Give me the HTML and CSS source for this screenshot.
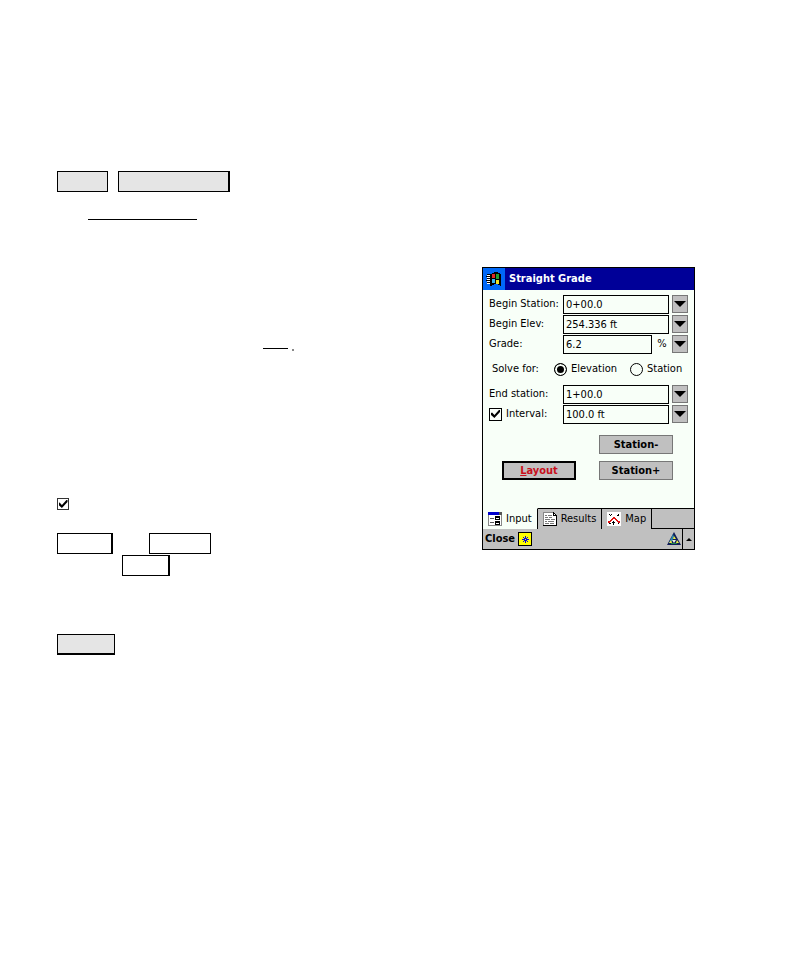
FILE: index.html
```html
<!DOCTYPE html>
<html lang="en">
<head>
    <meta charset="UTF-8">
    <meta name="viewport" content="width=device-width, initial-scale=1.0">
    <title>Straight Grade</title>
    <link rel="stylesheet" href="styles.css">
</head>
<body>
    <main class="page">
        <section class="notes">
            <div class="key-row">
                <button type="button" class="key filled w-small"></button>
                <button type="button" class="key filled shadow-right w-large"></button>
            </div>
            <div class="rule"></div>
            <div class="blank-link"><span class="line"></span><span class="dot"></span></div>
            <input type="checkbox" class="note-check" checked>
            <div class="key-row wide-gap">
                <button type="button" class="key shadow-right w-medium"></button>
                <button type="button" class="key w-wide"></button>
            </div>
            <div class="key-row indented">
                <button type="button" class="key shadow-right w-short"></button>
            </div>
            <div class="key-row last">
                <button type="button" class="key filled shadow-bottom w-base"></button>
            </div>
        </section>

        <section class="device">
            <header class="title-bar">
                <span class="start">
                    <svg width="16" height="16" viewBox="0 0 16 16" shape-rendering="crispEdges">
                        <path d="M1 3h3v1H1zM0 5h4v1H0zM1 7h3v1H1zM0 9h4v1H0zM1 11h3v1H1z" fill="#000"/>
                        <path d="M1 4h3v1H1zM1 6h3v1H1zM1 8h3v1H1zM1 10h3v1H1zM1 12h3v1H1z" fill="#fff"/>
                        <path d="M4 3h2V2h2V1h4v1h2v1h1v12h-1v-1h-2v-1H8v1H6v1H4z" fill="#000"/>
                        <path d="M6 3h3v4H6z" fill="#e02828"/>
                        <path d="M10 3h3v5h-3z" fill="#20a030"/>
                        <path d="M6 8h3v4H6z" fill="#38b8f0"/>
                        <path d="M10 9h3v4h-3z" fill="#f0e020"/>
                    </svg>
                </span>
                <h1>Straight Grade</h1>
            </header>

            <form class="panel">
                <div class="field">
                    <label for="begin-station">Begin Station:</label>
                    <input type="text" id="begin-station" value="0+00.0">
                    <button type="button" class="drop"></button>
                </div>
                <div class="field">
                    <label for="begin-elev">Begin Elev:</label>
                    <input type="text" id="begin-elev" value="254.336 ft">
                    <button type="button" class="drop"></button>
                </div>
                <div class="field with-unit">
                    <label for="grade">Grade:</label>
                    <input type="text" id="grade" value="6.2">
                    <span class="unit">%</span>
                    <button type="button" class="drop"></button>
                </div>

                <div class="solve">
                    <span class="solve-title">Solve for:</span>
                    <label class="choice first"><input type="radio" name="solve" checked>Elevation</label>
                    <label class="choice"><input type="radio" name="solve">Station</label>
                </div>

                <div class="field">
                    <label for="end-station">End station:</label>
                    <input type="text" id="end-station" value="1+00.0">
                    <button type="button" class="drop"></button>
                </div>
                <div class="field">
                    <label class="check"><input type="checkbox" checked>Interval:</label>
                    <input type="text" id="interval" value="100.0 ft">
                    <button type="button" class="drop"></button>
                </div>

                <div class="actions">
                    <button type="button" class="action minus">Station-</button>
                    <button type="button" class="action layout"><u>L</u>ayout</button>
                    <button type="button" class="action">Station+</button>
                </div>
            </form>

            <nav class="tabs">
                <button type="button" class="tab active">
                    <svg width="14" height="14" viewBox="0 0 14 14" shape-rendering="crispEdges">
                        <path d="M0 0h14v14H0z" fill="#888"/>
                        <path d="M0 0h11v3H0z" fill="#00c"/>
                        <path d="M11 0h3v3h-3z" fill="#555"/>
                        <path d="M1 3h12v10H1z" fill="#fff"/>
                        <path d="M2 6h4v1H2zM2 10h4v1H2z" fill="#555"/>
                        <path d="M7 4h5v4H7zM7 9h5v4H7z" fill="#000"/>
                        <path d="M8 6h3v1H8zM8 11h3v1H8z" fill="#fff"/>
                    </svg>
                    <span>Input</span>
                </button>
                <button type="button" class="tab results">
                    <svg width="14" height="14" viewBox="0 0 14 14" shape-rendering="crispEdges">
                        <path d="M0 0h10l4 4v10H0z" fill="#fff"/>
                        <path d="M0 0h10v1H0zM0 0h1v14H0z" fill="#888"/>
                        <path d="M0 13h14v1H0zM13 4h1v10h-1zM10 0h1v4h-1zM10 3h4v1h-4zM11 1h1v1h-1zM12 2h1v1h-1z" fill="#000"/>
                        <path d="M2 3h2v1H2zM5 3h4v1H5zM2 5h3v1H2zM6 5h3v1H6zM2 7h5v1H2zM8 7h4v1H8zM2 9h2v1H2zM5 9h6v1H5zM2 11h4v1H2zM7 11h4v1H7z" fill="#777"/>
                    </svg>
                    <span>Results</span>
                </button>
                <button type="button" class="tab">
                    <svg width="14" height="14" viewBox="0 0 14 14" shape-rendering="crispEdges">
                        <path d="M0 0h14v14H0z" fill="#fff"/>
                        <path d="M2 2h1v1H2zM3 3h1v1H3zM4 2h1v1H4zM11 2h1v2h-1zM10 3h1v1h-1zM2 11h2v1H2zM6 9h1v4H6zM5 10h3v1H5zM11 11h1v1h-1z" fill="#000"/>
                        <path d="M1 9h2V8h1V7h1V6h1V5h2v1h1v1h1v1h1v1h2v2h-2v-1h-1V9H9V8H8V7H6v1H5v1H4v1H3v1H1z" fill="#e01010"/>
                    </svg>
                    <span>Map</span>
                </button>
            </nav>

            <footer class="status-bar">
                <button type="button" class="close">Close</button>
                <button type="button" class="star">
                    <svg width="9" height="9" viewBox="0 0 9 9" shape-rendering="crispEdges">
                        <path d="M4 1h1v7H4zM1 4h7v1H1zM2 2h1v1H2zM3 3h1v1H3zM6 2h1v1H6zM5 3h1v1H5zM3 5h1v1H3zM2 6h1v1H2zM5 5h1v1H5zM6 6h1v1H6z" fill="#0000e0"/>
                        <path d="M4 4h1v1H4z" fill="#ff0"/>
                    </svg>
                </button>
                <span class="spacer"></span>
                <svg class="survey" width="14" height="14" viewBox="0 0 14 14">
                    <path d="M7 0L14 13H0z" fill="#101c58"/>
                    <path d="M6 2L2 11h2l3-6z" fill="#2888b0"/>
                    <path d="M7 4l2 3H6zM2 11l2-3 1 3zM9 11l1-3 2 3z" fill="#f0f040"/>
                    <path d="M4 11h6v1H4z" fill="#208848"/>
                    <path d="M5 8h4l-2 3z" fill="#e8f0e8"/>
                </svg>
                <button type="button" class="expand"></button>
            </footer>
        </section>
    </main>
</body>
</html>
```

FILE: styles.css
```css
* {
    box-sizing: border-box;
}
body {
    margin: 0;
    background: #fff;
    color: #000;
    font-family: "DejaVu Sans Condensed", "DejaVu Sans", sans-serif;
    font-stretch: condensed;
    font-size: 11px;
    line-height: 16px;
}
button,
input {
    margin: 0;
    padding: 0;
    font: inherit;
    color: inherit;
    border-radius: 0;
}
.page {
    display: grid;
    grid-template-columns: 1fr 213px;
    align-items: start;
    padding: 171px 91px 40px 57px;
}

/* left column */
.notes {
    display: flex;
    flex-direction: column;
    align-items: flex-start;
}
.key-row {
    display: flex;
    gap: 10px;
}
.key {
    height: 21px;
    background: #fff;
    border: 1px solid #000;
}
.filled {
    background: #e5e5e5;
}
.shadow-right {
    border-right-width: 2px;
}
.shadow-bottom {
    border-bottom-width: 2px;
}
.w-small { width: 51px; }
.w-large { width: 112px; }
.w-medium { width: 56px; }
.w-wide { width: 62px; }
.w-short { width: 48px; }
.w-base { width: 58px; }
.rule {
    width: 109px;
    height: 1px;
    margin: 27px 0 0 31px;
    background: #000;
}
.blank-link {
    display: flex;
    align-items: flex-start;
    gap: 4px;
    margin: 128px 0 0 206px;
}
.line {
    width: 25px;
    height: 1px;
    background: #000;
}
.dot {
    width: 2px;
    height: 2px;
    margin-top: 1px;
    background: #888;
}
input[type="checkbox"] {
    flex: none;
    appearance: none;
    width: 13px;
    height: 13px;
    border: 1px solid #000;
    background: #fafffa;
    display: grid;
    place-content: center;
}
input[type="checkbox"]:checked::before {
    content: "";
    width: 9px;
    height: 8px;
    background: #000;
    clip-path: polygon(0 38%, 12% 32%, 38% 62%, 88% 0, 100% 0, 100% 25%, 38% 100%, 0 62%);
}
.notes .note-check {
    width: 12px;
    height: 12px;
    margin-top: 147px;
    border-color: #333;
    background: #fff;
}
.wide-gap {
    gap: 36px;
    margin-top: 23px;
}
.indented {
    margin: 1px 0 0 65px;
}
.last {
    margin-top: 58px;
}

/* handheld screen */
.device {
    margin-top: 96px;
    border: 1px solid #000;
    background: #f8fff8;
}
.title-bar {
    display: flex;
    align-items: stretch;
    height: 22px;
    background: #000098;
    color: #fff;
}
.start {
    display: grid;
    place-items: center;
    width: 22px;
    background: #0068f8;
}
.title-bar h1 {
    margin: 0 0 0 4px;
    font-size: 11px;
    line-height: 22px;
}
.panel {
    padding: 4px 6px 28px;
}
.field {
    display: grid;
    grid-template-columns: 71px 1fr 16px;
    column-gap: 3px;
    align-items: center;
    height: 20px;
}
.with-unit {
    grid-template-columns: 71px 89px 1fr 16px;
}
.field label {
    white-space: nowrap;
}
.field > input {
    width: 100%;
    min-width: 0;
    height: 19px;
    padding-left: 2px;
    border: 1px solid #000;
    background: #f8fff8;
}
.unit {
    text-align: center;
}
.drop {
    display: grid;
    place-items: center;
    width: 16px;
    height: 18px;
    border: 1px solid #777;
    background: #c0c0c0;
}
.drop::before {
    content: "";
    border: 6px solid transparent;
    border-top-color: #000;
    border-bottom: 0;
}
.solve {
    display: flex;
    align-items: center;
    height: 30px;
    padding-left: 3px;
}
.solve-title {
    width: 62px;
}
.choice {
    display: flex;
    align-items: center;
    gap: 4px;
    white-space: nowrap;
}
.choice.first {
    width: 76px;
}
input[type="radio"] {
    flex: none;
    appearance: none;
    width: 13px;
    height: 13px;
    border: 1px solid #000;
    border-radius: 50%;
    background: #f8fff8;
}
input[type="radio"]:checked {
    background: #000;
    box-shadow: inset 0 0 0 2px #f8fff8;
}
.check {
    display: flex;
    align-items: center;
    gap: 4px;
}
.actions {
    display: grid;
    grid-template-columns: 74px 74px;
    gap: 7px 23px;
    margin: 11px 0 0 13px;
}
.action {
    height: 19px;
    border: 1px solid #777;
    background: #c0c0c0;
    font-weight: bold;
    line-height: 16px;
}
.minus {
    grid-column: 2;
}
.layout {
    border: 2px solid #000;
    color: #c8101c;
    line-height: 14px;
}
.tabs {
    display: flex;
    height: 21px;
    background: #c0c0c0;
}
.tab {
    display: flex;
    align-items: center;
    gap: 4px;
    padding: 0 5px;
    border: 0;
    border-top: 1px solid #000;
    border-right: 1px solid #000;
    background: #c0c0c0;
}
.tabs::after {
    content: "";
    flex: 1;
    border-top: 1px solid #000;
}
.tab.active {
    border-top-color: #f8fff8;
    background: #f8fff8;
}
.status-bar {
    display: flex;
    align-items: center;
    height: 20px;
    background: #c0c0c0;
    box-shadow: 0 -1px 0 #000;
}
.close {
    width: 30px;
    margin-left: 2px;
    border: 0;
    background: none;
    font-weight: bold;
    text-align: left;
}
.star {
    display: grid;
    place-items: center;
    width: 14px;
    height: 14px;
    margin-left: 3px;
    border: 1px solid #000;
    background: #ff0;
}
.spacer {
    flex: 1;
}
.expand {
    display: grid;
    place-items: center;
    width: 12px;
    height: 20px;
    margin-left: 1px;
    border: 0;
    border-left: 1px solid #000;
    background: none;
}
.expand::before {
    content: "";
    border: 3px solid transparent;
    border-bottom-color: #000;
    border-top: 0;
}
```
